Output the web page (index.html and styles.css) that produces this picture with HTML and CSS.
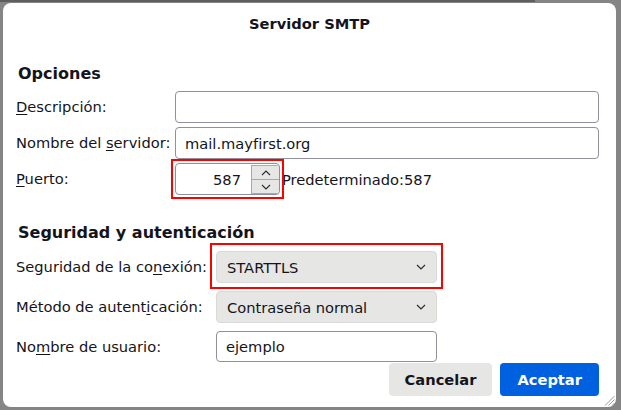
FILE: index.html
```html
<!DOCTYPE html>
<html lang="es">
<head>
<meta charset="utf-8">
<title>Servidor SMTP</title>
<link rel="stylesheet" href="styles.css">
</head>
<body>
<div class="dialog">
  <div class="title">Servidor SMTP</div>
  <div class="content">
    <h2 class="heading heading-opts">Opciones</h2>
    <div class="grid grid-opts">
      <div class="label"><u>D</u>escripción:</div>
      <div class="field"></div>
      <div class="label">Nombre del <u>s</u>ervidor:</div>
      <div class="field">mail.mayfirst.org</div>
      <div class="label"><u>P</u>uerto:</div>
      <div class="port-row">
        <div class="field port hl">
          <span class="port-value">587</span>
          <span class="spinner">
            <span class="spin spin-up"><svg width="10" height="6" viewBox="0 0 10 6"><polyline points="1,5 5,1 9,5" fill="none" stroke="#2b2a33" stroke-width="1.1"/></svg></span>
            <span class="spin spin-down"><svg width="10" height="6" viewBox="0 0 10 6"><polyline points="1,1 5,5 9,1" fill="none" stroke="#2b2a33" stroke-width="1.1"/></svg></span>
          </span>
        </div>
        <span class="default">Predeterminado:587</span>
      </div>
    </div>
    <h2 class="heading heading-sec">Seguridad y autenticación</h2>
    <div class="grid grid-sec">
      <div class="label">Seguridad de la co<u>n</u>exión:</div>
      <div class="select hl hl-wide">
        <span>STARTTLS</span>
        <svg class="chev" width="10" height="6" viewBox="0 0 10 6"><polyline points="1,1 5,5 9,1" fill="none" stroke="#2b2a33" stroke-width="1.2"/></svg>
      </div>
      <div class="label">Método de autent<u>i</u>cación:</div>
      <div class="select">
        <span>Contraseña normal</span>
        <svg class="chev" width="10" height="6" viewBox="0 0 10 6"><polyline points="1,1 5,5 9,1" fill="none" stroke="#2b2a33" stroke-width="1.2"/></svg>
      </div>
      <div class="label">No<u>m</u>bre de usuario:</div>
      <div class="field field-user">ejemplo</div>
    </div>
  </div>
  <div class="footer">
    <button class="btn">Cancelar</button>
    <button class="btn btn-primary">Aceptar</button>
  </div>
  <svg class="grip" width="11" height="11" viewBox="0 0 11 11">
    <line x1="10.5" y1="1" x2="1" y2="10.5" stroke="#9a9a9a" stroke-width="1"/>
    <line x1="10.5" y1="4.5" x2="4.5" y2="10.5" stroke="#9a9a9a" stroke-width="1"/>
    <line x1="10.5" y1="8" x2="8" y2="10.5" stroke="#9a9a9a" stroke-width="1"/>
  </svg>
</div>
</body>
</html>
```
FILE: styles.css
```css
html, body {
  margin: 0;
  height: 100%;
}

body {
  background:
    linear-gradient(#5e5e5e, #5e5e5e) no-repeat 0 0 / 535px 2px,
    #858585;
  padding: 3px 0 0 3px;
  box-sizing: border-box;
  font-family: "DejaVu Sans", "Noto Sans", sans-serif;
  font-size: 14.67px;
  color: #15141a;
}

.dialog {
  position: relative;
  width: 613px;
  height: 404px;
  background: #ffffff;
  border-radius: 8px;
  box-sizing: border-box;
  padding: 12px 0 11px 0;
  display: flex;
  flex-direction: column;
}

.title {
  text-align: center;
  font-weight: bold;
  line-height: 17px;
}

.content {
  padding: 0 17px 0 13px;
}

.heading {
  margin: 0;
  font-size: 16px;
  font-weight: bold;
  line-height: 19px;
  padding-left: 2px;
}

.heading-opts {
  margin-top: 32px;
  margin-bottom: 8px;
}

.heading-sec {
  margin-top: 28px;
  margin-bottom: 9px;
}

.grid {
  display: grid;
  align-items: center;
}

.grid-opts {
  grid-template-columns: 159px 1fr;
  row-gap: 4px;
}

.grid-sec {
  grid-template-columns: 200px 221px;
  row-gap: 8px;
}

.label {
  white-space: nowrap;
  line-height: 18px;
}

.label u {
  text-underline-offset: 2px;
}

.field {
  box-sizing: border-box;
  height: 32px;
  border: 1px solid #8f8f9d;
  border-radius: 4px;
  background: #ffffff;
  padding: 0 9px;
  display: flex;
  align-items: center;
  white-space: nowrap;
}

.field-user {
  height: 31px;
}

.port-row {
  display: flex;
  align-items: center;
  gap: 2px;
}

.port {
  width: 105px;
  padding: 0;
  align-items: stretch;
}

.port-value {
  flex: 1;
  display: flex;
  align-items: center;
  justify-content: flex-end;
  padding-right: 10px;
}

.spinner {
  width: 27px;
  margin: 1px 0 0 0;
  display: flex;
  flex-direction: column;
  border: 1px solid #a8a8b0;
  border-right: none;
  border-radius: 0 3px 3px 0;
  overflow: hidden;
}

.spin {
  flex: 1;
  background: #e6e7e5;
  display: flex;
  align-items: center;
  justify-content: center;
}

.spin-up {
  border-bottom: 1px solid #a8a8b0;
}

.hl {
  position: relative;
}

.hl::after {
  content: "";
  position: absolute;
  top: -5px;
  right: -5px;
  bottom: -5px;
  left: -5px;
  border: 2px solid #ff0000;
  pointer-events: none;
}

.hl-wide::after {
  top: -9px;
  right: -7px;
  bottom: -7px;
  left: -7px;
}

.select {
  box-sizing: border-box;
  height: 32px;
  border: 1px solid #d9dad8;
  border-radius: 4px;
  background: #e6e7e5;
  padding: 0 10px 0 10px;
  display: flex;
  align-items: center;
  justify-content: space-between;
  white-space: nowrap;
}

.chev {
  display: block;
}

.footer {
  margin-top: auto;
  padding-right: 17px;
  display: flex;
  justify-content: flex-end;
  gap: 8px;
}

.btn {
  height: 33px;
  border: none;
  border-radius: 4px;
  padding: 0 16px;
  font-family: inherit;
  font-size: 14.67px;
  font-weight: bold;
  background: #e6e7e5;
  color: #15141a;
}

.btn-primary {
  background: #0061e0;
  color: #ffffff;
  padding: 0 17px;
}

.grip {
  position: absolute;
  right: 1px;
  bottom: 1px;
}
```
